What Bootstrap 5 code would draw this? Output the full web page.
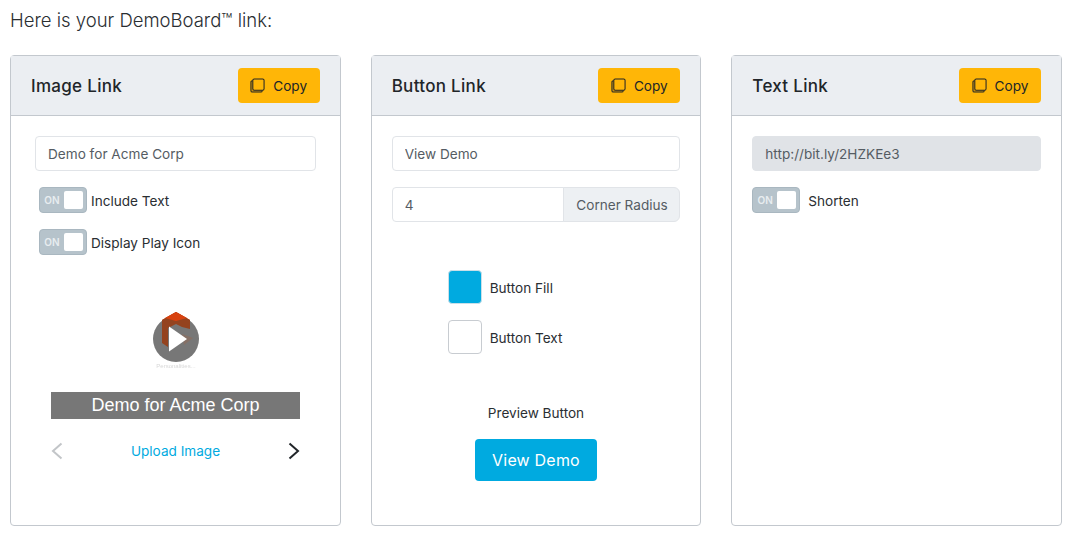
<!DOCTYPE html>
<html lang="en">
<head>
<meta charset="utf-8">
<title>DemoBoard link</title>
<link href="https://cdn.jsdelivr.net/npm/bootstrap@5.3.0/dist/css/bootstrap.min.css" rel="stylesheet">
<style>
body{font-family:Inter,"Liberation Sans",sans-serif;font-size:13.6px;color:#2a2e32;background:#fff;overflow:hidden}
.page-wrap{padding:0 14px 0 10px}
.page-title{font-size:18.5px;font-weight:300;line-height:22px;margin:0;padding-top:9px;height:55px}
.card-row{--bs-gutter-x:30px;margin-left:-15px;margin-right:-15px}
.link-card{height:471px;border:1px solid #c3c8ce;border-radius:4px;--bs-card-border-radius:4px;--bs-card-inner-border-radius:3px}
.link-head{background:#ebeef2;border-bottom:1px solid #c3c8ce;height:60px;padding:0 20px;flex:none}
.link-title{font-size:17px;font-weight:500;letter-spacing:.3px;margin:2px 0 0;line-height:1;color:#212529}
.copy-btn{background:#ffb607;border:0;border-radius:4px;height:35px;width:82px;font-size:13.6px;color:#212529;padding:0}
.copy-text{padding-top:2px}
.copy-icon{width:15px;height:15px}
.field-input{height:35px;font-size:13.6px;color:#555c63;border-color:#e1e4e8;border-radius:4px;padding:0 12px}
.field-input[readonly]{background:#e0e3e7;border-color:#e0e3e7}
.addon{font-size:13.6px;color:#555c63;background:#edf0f3;border-color:#e1e4e8;padding:2px 12px 0;width:117px}
.pane-one{padding:20px 24px 0 24px}
.pane-two{padding:20px 20px 0 20px}
.toggle-row{margin-left:4px;gap:4px;height:26px}
.toggle-box{width:48px;height:26px;background:#b6c3cb;border:1px solid #a9b7c0;border-radius:4px;padding:0 3px 0 0}
.toggle-on{font-size:10px;font-weight:600;color:#e8edf0;width:24px;text-align:center;letter-spacing:.2px}
.toggle-knob{width:19px;height:18px;background:#fff;border-radius:2px;margin-left:auto}
.label-text{padding-top:2px}
.thumb-art{margin:55px 0 0 16px;width:249px}
.thumb-bar{background:#777;color:#fff;height:27px;line-height:26px;font-family:"Liberation Sans",sans-serif;font-size:18px;text-align:center}
.thumb-icon{margin:0 auto 19px;filter:blur(.7px)}
.thumb-nav{height:20px;margin-top:22px}
.upload-link{color:#00aae0;text-decoration:none}
.swatch-list{margin:48px 0 0 56px;gap:16px}
.swatch{width:34px;height:34px;border-radius:4px;border:1px solid #c8ccd1;background:#fff}
.swatch-fill{background:#00aae0;border-color:#c9dfe8}
.preview-label{margin-top:51px;line-height:17px}
.preview-btn{background:#00aae0;color:#fff;border:0;border-radius:4px;width:122px;height:42px;font-size:16px;margin-top:17px;padding:0;letter-spacing:.2px}
.gap-field{margin-top:16px}
.gap-toggle{margin-top:16px}
.logo-note{font-size:6px;fill:#d8d8d8;font-family:"Liberation Sans",sans-serif}
</style>
</head>
<body>
<div class="page-wrap">
  <p class="page-title">Here is your DemoBoard™ link:</p>
  <div class="row card-row">
    <div class="col-4">
      <div class="card link-card">
        <div class="link-head d-flex align-items-center justify-content-between">
          <h2 class="link-title">Image Link</h2>
          <button class="copy-btn d-flex align-items-center justify-content-center gap-2" type="button">
            <svg class="copy-icon" viewBox="0 0 16 16" fill="none" stroke="#212529" stroke-width="1.1"><path d="M3 3H2.500A1.500 1.500 0 0 0 1 4.500V13.500A1.500 1.500 0 0 0 2.500 15H11.500A1.500 1.500 0 0 0 13 13.500V13" fill="#a87a10" fill-opacity=".45"/><rect x="3" y="1" width="12" height="12" rx="1.500" fill="#ffb607"/></svg>
            <span class="copy-text">Copy</span>
          </button>
        </div>
        <div class="pane-one">
          <input class="form-control field-input" type="text" value="Demo for Acme Corp">
          <div class="toggle-row d-flex align-items-center gap-toggle">
            <div class="toggle-box d-flex align-items-center"><span class="toggle-on">ON</span><span class="toggle-knob"></span></div>
            <span class="label-text">Include Text</span>
          </div>
          <div class="toggle-row d-flex align-items-center gap-toggle">
            <div class="toggle-box d-flex align-items-center"><span class="toggle-on">ON</span><span class="toggle-knob"></span></div>
            <span class="label-text">Display Play Icon</span>
          </div>
          <div class="thumb-art">
            <svg class="thumb-icon d-block" width="60" height="63" viewBox="0 0 60 63">
              <path d="M30 2 44 10 30 12 16 10Z" fill="#e8430b"/>
              <circle cx="30" cy="29" r="23" fill="#777"/>
              <path d="M16 10 30 2 44 10 44 19 36 17 30 14 22 18 22 37 16 33Z" fill="#94431f"/>
              <path d="M19 8 30 2 41 8 30 11Z" fill="#d8420f"/>
              <path d="M36 24 47 28 38 35Z" fill="#857066"/>
              <path d="M23 16.500 41 29 23 41.500Z" fill="#fff"/>
              <text class="logo-note" x="30" y="58" text-anchor="middle">Personalities...</text>
            </svg>
            <div class="thumb-bar">Demo for Acme Corp</div>
            <div class="thumb-nav d-flex align-items-center justify-content-between">
              <svg width="12" height="18" viewBox="0 0 12 18" fill="none" stroke="#c2c5c8" stroke-width="2"><path d="M10.500 1.500 2 9l8.500 7.500"/></svg>
              <a class="upload-link" href="#">Upload Image</a>
              <svg width="12" height="18" viewBox="0 0 12 18" fill="none" stroke="#212529" stroke-width="2"><path d="M1.500 1.500 10 9l-8.500 7.500"/></svg>
            </div>
          </div>
        </div>
      </div>
    </div>
    <div class="col-4">
      <div class="card link-card">
        <div class="link-head d-flex align-items-center justify-content-between">
          <h2 class="link-title">Button Link</h2>
          <button class="copy-btn d-flex align-items-center justify-content-center gap-2" type="button">
            <svg class="copy-icon" viewBox="0 0 16 16" fill="none" stroke="#212529" stroke-width="1.1"><path d="M3 3H2.500A1.500 1.500 0 0 0 1 4.500V13.500A1.500 1.500 0 0 0 2.500 15H11.500A1.500 1.500 0 0 0 13 13.500V13" fill="#a87a10" fill-opacity=".45"/><rect x="3" y="1" width="12" height="12" rx="1.500" fill="#ffb607"/></svg>
            <span class="copy-text">Copy</span>
          </button>
        </div>
        <div class="pane-two">
          <input class="form-control field-input" type="text" value="View Demo">
          <div class="input-group gap-field">
            <input class="form-control field-input" type="text" value="4">
            <span class="input-group-text addon">Corner Radius</span>
          </div>
          <div class="swatch-list d-flex flex-column">
            <div class="d-flex align-items-center gap-2"><span class="swatch swatch-fill"></span><span class="label-text">Button Fill</span></div>
            <div class="d-flex align-items-center gap-2"><span class="swatch"></span><span class="label-text">Button Text</span></div>
          </div>
          <div class="d-flex flex-column align-items-center">
            <div class="preview-label">Preview Button</div>
            <button class="preview-btn" type="button">View Demo</button>
          </div>
        </div>
      </div>
    </div>
    <div class="col-4">
      <div class="card link-card">
        <div class="link-head d-flex align-items-center justify-content-between">
          <h2 class="link-title">Text Link</h2>
          <button class="copy-btn d-flex align-items-center justify-content-center gap-2" type="button">
            <svg class="copy-icon" viewBox="0 0 16 16" fill="none" stroke="#212529" stroke-width="1.1"><path d="M3 3H2.500A1.500 1.500 0 0 0 1 4.500V13.500A1.500 1.500 0 0 0 2.500 15H11.500A1.500 1.500 0 0 0 13 13.500V13" fill="#a87a10" fill-opacity=".45"/><rect x="3" y="1" width="12" height="12" rx="1.500" fill="#ffb607"/></svg>
            <span class="copy-text">Copy</span>
          </button>
        </div>
        <div class="pane-two">
          <input class="form-control field-input" type="text" value="http://bit.ly/2HZKEe3" readonly>
          <div class="d-flex align-items-center gap-2 gap-toggle">
            <div class="toggle-box d-flex align-items-center"><span class="toggle-on">ON</span><span class="toggle-knob"></span></div>
            <span class="label-text">Shorten</span>
          </div>
        </div>
      </div>
    </div>
  </div>
</div>
<script src="https://cdn.jsdelivr.net/npm/bootstrap@5.3.0/dist/js/bootstrap.bundle.min.js"></script>
</body>
</html>
